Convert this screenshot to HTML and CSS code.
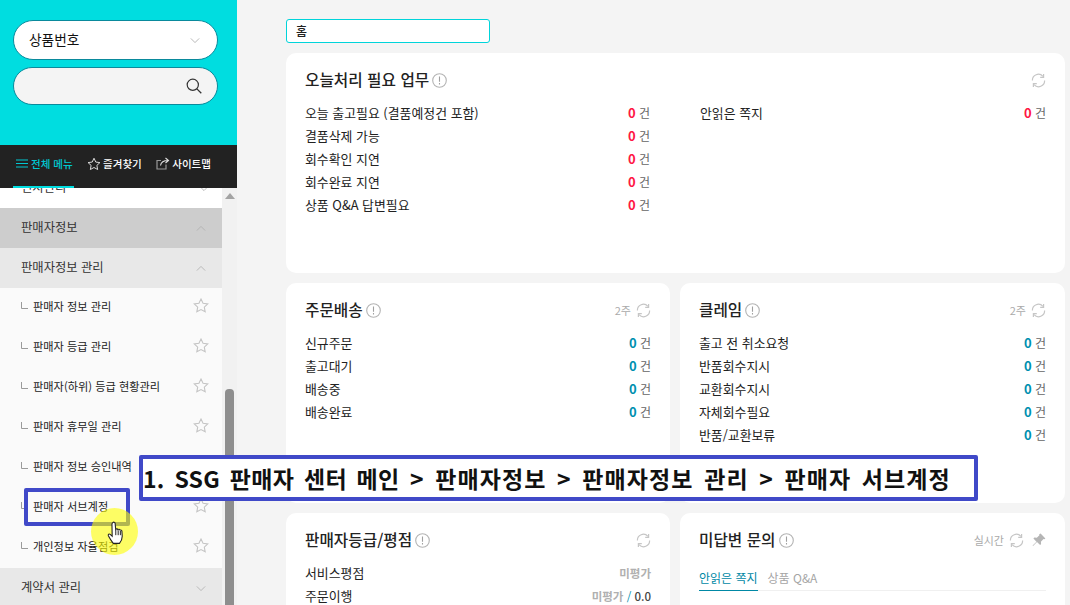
FILE: index.html
```html
<!DOCTYPE html>
<html lang="ko">
<head>
<meta charset="utf-8">
<title>SSG 판매자 센터</title>
<link rel="stylesheet" href="styles.css">
</head>
<body>
<svg class="defs" width="0" height="0" aria-hidden="true">
  <defs>
    <symbol id="star" viewBox="0 0 18 18"><path d="M9 1.6l2.3 4.9 5.3.7-3.9 3.6 1 5.3L9 13.5l-4.7 2.6 1-5.3-3.9-3.6 5.3-.7z" fill="none" stroke="currentColor" stroke-width="1.2" stroke-linejoin="miter"/></symbol>
    <symbol id="chev" viewBox="0 0 12 8"><path d="M1 1.5l5 5 5-5" fill="none" stroke="currentColor" stroke-width="1"/></symbol>
    <symbol id="chevup" viewBox="0 0 12 8"><path d="M1 6.5l5-5 5 5" fill="none" stroke="currentColor" stroke-width="1"/></symbol>
    <symbol id="info" viewBox="0 0 15 15"><circle cx="7.5" cy="7.5" r="6.8" fill="none" stroke="#b4b4b4" stroke-width="1.1"/><path d="M7.5 3.6v5.2M7.5 10v1.4" stroke="#a0a0a0" stroke-width="1.1"/></symbol>
    <symbol id="refresh" viewBox="0 0 15 15"><path d="M1.4 7.5A6 6 0 0 1 11.9 3.3M13.6 7.5A6 6 0 0 1 3.1 11.7" fill="none" stroke="#c6c6c6" stroke-width="1.2"/><path d="M12.6 1v3.4H9.2M2.4 14v-3.4h3.4" fill="none" stroke="#c6c6c6" stroke-width="1.2"/></symbol>
    <symbol id="corner" viewBox="0 0 7 7"><path d="M.5 0v6.5H7" fill="none" stroke="#9a9a9a" stroke-width="1"/></symbol>
  </defs>
</svg>
<div class="page">
  <aside class="sidebar">
    <div class="search-panel">
      <div class="pill pill-select"><span>상품번호</span><svg class="pill-chev"><use href="#chev"/></svg></div>
      <div class="pill pill-search">
        <svg class="search-icon" viewBox="0 0 16 16"><circle cx="6.8" cy="6.8" r="5.6" fill="none" stroke="#333" stroke-width="1.2"/><path d="M10.9 10.9l4.4 4.4" stroke="#333" stroke-width="1.3"/></svg>
      </div>
    </div>
    <nav class="tabs">
      <a class="tab tab-on">
        <svg class="tab-burger" viewBox="0 0 12 9"><path d="M0 1h12M0 4.5h12M0 8h12" stroke="#00c8d2" stroke-width="1"/></svg>전체 메뉴
      </a>
      <a class="tab"><svg class="tab-star"><use href="#star"/></svg>즐겨찾기</a>
      <a class="tab"><svg class="tab-share" viewBox="0 0 14 13"><path d="M10 7.5v4.5H1V3.5h4" fill="none" stroke="#999" stroke-width="1.2"/><path d="M4.5 8.5C5 5.5 7.5 3.5 12 3.5M9.5 1l3 2.5-3 2.5" fill="none" stroke="#ddd" stroke-width="1.1"/></svg>사이트맵</a>
    </nav>
    <div class="menu-wrap">
      <ul class="menu">
        <li class="row row-plain"><span>전시관리</span><svg class="row-chev"><use href="#chev"/></svg></li>
        <li class="row row-d1"><span>판매자정보</span><svg class="row-chev"><use href="#chevup"/></svg></li>
        <li class="row row-d2"><span>판매자정보 관리</span><svg class="row-chev"><use href="#chevup"/></svg></li>
        <li class="row row-d3"><svg class="corner"><use href="#corner"/></svg><span>판매자 정보 관리</span><svg class="row-star"><use href="#star"/></svg></li>
        <li class="row row-d3"><svg class="corner"><use href="#corner"/></svg><span>판매자 등급 관리</span><svg class="row-star"><use href="#star"/></svg></li>
        <li class="row row-d3"><svg class="corner"><use href="#corner"/></svg><span>판매자(하위) 등급 현황관리</span><svg class="row-star"><use href="#star"/></svg></li>
        <li class="row row-d3"><svg class="corner"><use href="#corner"/></svg><span>판매자 휴무일 관리</span><svg class="row-star"><use href="#star"/></svg></li>
        <li class="row row-d3"><svg class="corner"><use href="#corner"/></svg><span>판매자 정보 승인내역</span><svg class="row-star"><use href="#star"/></svg></li>
        <li class="row row-d3"><svg class="corner"><use href="#corner"/></svg><span>판매자 서브계정</span><svg class="row-star"><use href="#star"/></svg></li>
        <li class="row row-d3"><svg class="corner"><use href="#corner"/></svg><span>개인정보 자율점검</span><svg class="row-star"><use href="#star"/></svg></li>
        <li class="row row-d2"><span>계약서 관리</span><svg class="row-chev"><use href="#chev"/></svg></li>
      </ul>
      <div class="scrollbar"><i class="scroll-up"></i><i class="scroll-thumb"></i></div>
    </div>
  </aside>

  <main class="main">
    <div class="home-tab">홈</div>
    <div class="cards">
      <section class="card card-wide">
        <header class="card-head"><h2>오늘처리 필요 업무</h2><svg class="info"><use href="#info"/></svg><div class="head-right"><svg class="refresh"><use href="#refresh"/></svg></div></header>
        <div class="two-col">
          <ul class="rows">
            <li><span>오늘 출고필요 (결품예정건 포함)</span><span class="count"><b class="red">0</b> 건</span></li>
            <li><span>결품삭제 가능</span><span class="count"><b class="red">0</b> 건</span></li>
            <li><span>회수확인 지연</span><span class="count"><b class="red">0</b> 건</span></li>
            <li><span>회수완료 지연</span><span class="count"><b class="red">0</b> 건</span></li>
            <li><span>상품 Q&amp;A 답변필요</span><span class="count"><b class="red">0</b> 건</span></li>
          </ul>
          <ul class="rows">
            <li><span>안읽은 쪽지</span><span class="count"><b class="red">0</b> 건</span></li>
          </ul>
        </div>
      </section>
      <section class="card">
        <header class="card-head"><h2>주문배송</h2><svg class="info"><use href="#info"/></svg><div class="head-right"><em>2주</em><svg class="refresh"><use href="#refresh"/></svg></div></header>
        <ul class="rows">
          <li><span>신규주문</span><span class="count"><b class="blue">0</b> 건</span></li>
          <li><span>출고대기</span><span class="count"><b class="blue">0</b> 건</span></li>
          <li><span>배송중</span><span class="count"><b class="blue">0</b> 건</span></li>
          <li><span>배송완료</span><span class="count"><b class="blue">0</b> 건</span></li>
        </ul>
      </section>
      <section class="card">
        <header class="card-head"><h2>클레임</h2><svg class="info"><use href="#info"/></svg><div class="head-right"><em>2주</em><svg class="refresh"><use href="#refresh"/></svg></div></header>
        <ul class="rows">
          <li><span>출고 전 취소요청</span><span class="count"><b class="blue">0</b> 건</span></li>
          <li><span>반품회수지시</span><span class="count"><b class="blue">0</b> 건</span></li>
          <li><span>교환회수지시</span><span class="count"><b class="blue">0</b> 건</span></li>
          <li><span>자체회수필요</span><span class="count"><b class="blue">0</b> 건</span></li>
          <li><span>반품/교환보류</span><span class="count"><b class="blue">0</b> 건</span></li>
        </ul>
      </section>
      <section class="card">
        <header class="card-head"><h2>판매자등급/평점</h2><svg class="info"><use href="#info"/></svg><div class="head-right"><svg class="refresh"><use href="#refresh"/></svg></div></header>
        <ul class="rows">
          <li><span>서비스평점</span><span class="grade">미평가</span></li>
          <li><span>주문이행</span><span class="grade">미평가 <i class="slash">/</i> <i class="score">0.0</i></span></li>
        </ul>
      </section>
      <section class="card">
        <header class="card-head"><h2>미답변 문의</h2><svg class="info"><use href="#info"/></svg><div class="head-right"><em>실시간</em><svg class="refresh"><use href="#refresh"/></svg><svg class="pin" viewBox="0 0 14 14"><path d="M8.6.6l4.8 4.8-1 .9-.9-.2-2.6 2.6.2 2.4-1 1L5 9.100 1 13l-.4-.4L4.500 8.700 1.400 5.600l1-1 2.400.2 2.600-2.600-.2-.9z" fill="#b5b5b5"/></svg></div></header>
        <div class="subtabs"><span class="subtab subtab-on">안읽은 쪽지</span><span class="subtab">상품 Q&amp;A</span></div>
      </section>
    </div>
  </main>
</div>

<div class="note note-title"><span class="note-lead">1. SSG 판매자 센터 메인</span> &gt; 판매자정보 &gt; 판매자정보 관리 &gt; 판매자 서브계정</div>
<div class="note-mark"></div>
<div class="note-glow"></div>
<svg class="note-hand" viewBox="0 0 16 22"><path d="M5 1.500c.8-.8 2-.5 2.200.7l.5 5.500c.6-.8 1.700-.6 2 .2.600-.6 1.700-.4 2 .4.700-.3 1.600.1 1.700 1l.3 4.700c0 2.500-1.200 5-2.500 6.500H5.500C4 18.500 2 15.500 1 13.500c-.5-1.200.7-2 1.700-1.200L4.500 14 4.300 3c0-.6.300-1.200.7-1.500z" fill="#fff" stroke="#222" stroke-width="1"/><path d="M7.800 8v5M10 8.500V13M12 9v4" stroke="#222" stroke-width=".9"/></svg>
</body>
</html>
```
FILE: styles.css
```css
* { box-sizing: border-box; }
html, body { margin: 0; height: 605px; overflow: hidden; }
body {
  position: relative;
  background: #f4f4f4;
  color: #222;
  font-family: "Noto Sans CJK KR", "Noto Sans", sans-serif;
  font-size: 13px;
}
ul { list-style: none; margin: 0; padding: 0; }
.defs { position: absolute; }
.page { display: flex; height: 605px; }

.sidebar { width: 237px; flex: none; display: flex; flex-direction: column; height: 605px; background: #fff; }
.search-panel {
  height: 145px; flex: none; background: #00dde0;
  padding: 20px 20px 0 13px;
  display: flex; flex-direction: column; gap: 7px;
}
.pill {
  width: 205px; display: flex; align-items: center; justify-content: space-between;
  border: 1px solid #0a8a9c; border-radius: 20px;
}
.pill-select { height: 40px; background: #fff; padding: 0 17px 2px 15px; font-size: 13.700px; color: #111; }
.pill-chev { width: 10px; height: 7px; color: #aaa; margin-top: 2px; }
.pill-search { height: 38px; background: #f4f4f4; padding: 0 15px; justify-content: flex-end; }
.search-icon { width: 16px; height: 16px; }

.tabs {
  height: 43px; flex: none; background: #222; display: flex; align-items: center;
  padding: 0 0 6px 16px; gap: 14.500px; position: relative;
  color: #fff; font-size: 10.500px; font-weight: 500;
}
.tab { display: flex; align-items: center; gap: 2px; white-space: nowrap; }
.tab-on { color: #00c8d2; position: relative; gap: 3px; }
.tab-on::after {
  content: ""; position: absolute; left: -3px; right: -1px; top: 30px;
  height: 2px; background: #00dde0;
}
.tab-burger { width: 12px; height: 9px; }
.tab-star { width: 14px; height: 14px; color: #e6e6e6; }
.tab-share { width: 14px; height: 13px; }

.menu-wrap { flex: 1; display: flex; overflow: hidden; }
.menu { width: 222px; flex: none; margin-top: -20px; background: #fafafa; }
.row { height: 40px; display: flex; align-items: center; padding-right: 13px; color: #333; font-size: 12.300px; }
.row span { flex: 1; white-space: nowrap; padding-bottom: 2px; }
.row-plain { background: #fff; padding-left: 21px; }
.row-d1 { background: #cdcdcd; padding-left: 21px; padding-right: 16px; }
.row-d2 { background: #e8e8e8; padding-left: 21px; padding-right: 16px; }
.row-d3 { padding-left: 21px; font-size: 11.200px; color: #222; }
.row-d3 span { padding-bottom: 4px; }
.row-d3 .corner { width: 7px; height: 7px; margin: 0 5px 5px 0; flex: none; }
.row-chev { width: 10px; height: 7px; color: #b0b0b0; flex: none; }
.row-star { width: 16px; height: 17px; color: #c4c4c4; flex: none; margin-bottom: 5px; }
.scrollbar { width: 15px; flex: none; background: #f1f1f1; display: flex; flex-direction: column; align-items: center; padding-top: 5px; }
.scroll-up { width: 0; height: 0; border: 5px solid transparent; border-top: 0; border-bottom: 6px solid #a3a3a3; }
.scroll-thumb { width: 9px; height: 220px; margin-top: 190px; background: #8e8e8e; border-radius: 4px 4px 0 0; }

.main { flex: 1; padding: 19px 5px 0 49px; overflow: hidden; min-width: 0; }
.home-tab {
  width: 204px; height: 24px; background: #fff; border: 1px solid #00d4da; border-radius: 3px;
  padding-left: 9px; line-height: 21px; font-size: 12px; font-weight: 500; color: #222;
}
.cards { display: grid; grid-template-columns: 384px 385px; grid-auto-rows: 220px; gap: 10px; margin-top: 10px; }
.card { background: #fff; border-radius: 10px; padding: 0 19px; }
.card-wide { grid-column: 1 / span 2; }
.card-head { height: 48px; display: flex; align-items: center; padding-top: 6px; }
.card-head h2 { margin: 0; font-size: 15.700px; font-weight: 500; color: #222; line-height: 20px; }
.info { width: 15px; height: 15px; margin-left: 3px; flex: none; }
.head-right { margin-left: auto; display: flex; align-items: center; gap: 5px; }
.head-right em { font-style: normal; font-size: 11px; color: #aaa; }
.refresh { width: 15px; height: 15px; flex: none; }
.pin { width: 14px; height: 14px; margin-left: 3px; }
.two-col { display: grid; grid-template-columns: 345px 346px; gap: 50px; }
.rows li { height: 23px; display: flex; align-items: center; justify-content: space-between; font-size: 12.900px; color: #222; }
.count { color: #666; font-size: 12px; }
.count b { font-weight: 700; font-size: 13px; }
.red { color: #ff1744; }
.blue { color: #0090b0; }
.grade { font-size: 11.500px; color: #b0b0b0; font-weight: 700; }
.slash { font-style: normal; color: #0090b0; font-weight: 400; }
.score { font-style: normal; color: #444; font-weight: 500; }
.subtabs { display: flex; gap: 10px; margin-top: 5px; height: 25px; border-bottom: 1px solid #f0f0f0; font-size: 12px; color: #a5a5a5; }
.subtab { height: 25px; line-height: 24px; }
.subtab-on { color: #0088a5; border-bottom: 1px solid #0088a5; }

.note {
  position: absolute; left: 139px; top: 455px; width: 839px; height: 46px;
  background: #fff; border: 4px solid #4049c8; border-radius: 2px;
  padding-left: 0; line-height: 38px; font-size: 23px; font-weight: 700; color: #111;
  white-space: nowrap; word-spacing: 3px; letter-spacing: 1.100px;
}
.note-lead { letter-spacing: .3px; }
.note-mark { position: absolute; left: 24px; top: 488px; width: 106px; height: 38px; border: 4px solid #4049c8; border-radius: 2px; }
.note-glow { position: absolute; left: 91px; top: 508px; width: 47px; height: 47px; border-radius: 50%; background: rgba(255, 255, 0, .6); }
.note-hand { position: absolute; left: 107px; top: 521px; width: 18px; height: 24px; }
```
